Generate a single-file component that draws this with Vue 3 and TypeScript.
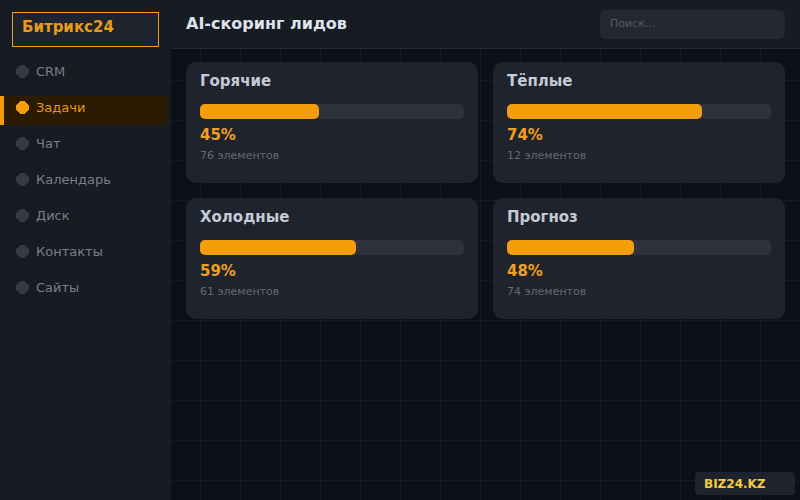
<script setup lang="ts">
import { ref } from 'vue'

interface Segment {
  title: string
  percent: number
  count: number
}

const sections: string[] = ['CRM', 'Задачи', 'Чат', 'Календарь', 'Диск', 'Контакты', 'Сайты']
const active = ref('Задачи')
const query = ref('')

const segments: Segment[] = [
  { title: 'Горячие', percent: 45, count: 76 },
  { title: 'Тёплые', percent: 74, count: 12 },
  { title: 'Холодные', percent: 59, count: 61 },
  { title: 'Прогноз', percent: 48, count: 74 },
]
</script>

<template>
  <div class="app">
    <aside class="sidebar">
      <div class="logo">Битрикс24</div>
      <nav class="nav">
        <a
          v-for="section in sections"
          :key="section"
          href="#"
          class="nav-item"
          :class="{ active: section === active }"
          @click.prevent="active = section"
        >
          <svg class="dot" viewBox="0 0 13 13" aria-hidden="true">
            <path d="M4 0H9V1H10V2H11V3H12V4H13V9H12V10H11V11H10V12H9V13H4V12H3V11H2V10H1V9H0V4H1V3H2V2H3V1H4Z" />
          </svg>
          <span>{{ section }}</span>
        </a>
      </nav>
    </aside>

    <div class="content">
      <header class="header">
        <h1 class="title">AI-скоринг лидов</h1>
        <input v-model="query" class="search" type="text" placeholder="Поиск..." aria-label="Поиск" />
      </header>
      <main class="cards">
        <section v-for="segment in segments" :key="segment.title" class="card">
          <h2 class="card-title">{{ segment.title }}</h2>
          <div class="track">
            <div class="fill" :style="{ width: segment.percent + '%' }"></div>
          </div>
          <div class="percent">{{ segment.percent }}%</div>
          <div class="count">{{ segment.count }} элементов</div>
        </section>
      </main>
    </div>

    <div class="badge">BIZ24.KZ</div>
  </div>
</template>

<style>
body {
  background: #0d1017;
}
</style>

<style scoped>
.app {
  display: flex;
  min-height: 100vh;
  font-family: 'DejaVu Sans', sans-serif;
  background-color: #0d1017;
  background-image:
    linear-gradient(to right, #161a21 1px, transparent 1px),
    linear-gradient(to bottom, #161a21 1px, transparent 1px);
  background-size: 40px 40px;
}

.app * {
  box-sizing: border-box;
}

.sidebar {
  flex: 0 0 171px;
  background: #171b22;
}

.logo {
  height: 35px;
  margin: 12px 12px 13px;
  padding: 0 9px;
  border: 1px solid #f0a020;
  background: #1f232d;
  color: #e89c1c;
  font-size: 15px;
  font-weight: bold;
  line-height: 29px;
}

.nav {
  display: flex;
  flex-direction: column;
  gap: 7px;
  padding-right: 4px;
}

.nav-item {
  display: flex;
  align-items: center;
  gap: 7px;
  height: 29px;
  padding: 0 12px;
  border-left: 4px solid transparent;
  color: #777f90;
  font-size: 13px;
  text-decoration: none;
}

.nav-item span {
  height: 29px;
  line-height: 24px;
}

.nav-item.active {
  border-left-color: #f59e0b;
  background: #2a1b02;
  color: #e8980f;
}

.dot {
  width: 13px;
  height: 13px;
  margin-bottom: 6px;
  fill: #363a45;
  shape-rendering: crispEdges;
}

.active .dot {
  fill: #f59e0b;
}

.content {
  flex: 1;
  min-width: 0;
}

.header {
  display: flex;
  align-items: flex-start;
  justify-content: space-between;
  height: 49px;
  padding: 10px 15px;
  border-bottom: 1px solid #252932;
  background: #171b22;
}

.title {
  margin: 0;
  color: #dfe2ec;
  font-size: 16px;
  line-height: 27px;
}

.search {
  width: 185px;
  height: 29px;
  padding: 0 10px 3px;
  border: 0;
  border-radius: 6px;
  outline: 0;
  background: #242832;
  color: #c9cdd8;
  font-family: inherit;
  font-size: 11px;
}

.search::placeholder {
  color: #555b67;
  opacity: 1;
}

.cards {
  display: grid;
  grid-template-columns: 1fr 1fr;
  gap: 15px;
  padding: 13px 15px;
}

.card {
  min-height: 121px;
  padding: 8px 14px;
  border-radius: 10px;
  background: #1f232d;
}

.card-title {
  margin: 0 0 12px;
  color: #c6cad6;
  font-size: 15px;
  line-height: 22px;
}

.track {
  height: 15px;
  border-radius: 5px;
  background: #2f323c;
}

.fill {
  height: 100%;
  border-radius: 5px;
  background: #f59e0b;
}

.percent {
  margin-top: 5px;
  color: #f0a020;
  font-size: 15px;
  font-weight: bold;
  line-height: 22px;
}

.count {
  color: #646a76;
  font-size: 11px;
  line-height: 20px;
}

.badge {
  position: fixed;
  right: 5px;
  bottom: 5px;
  box-sizing: border-box;
  width: 100px;
  height: 23px;
  padding: 0 9px;
  border-radius: 4px;
  background: #1f232d;
  color: #f5cc3d;
  font-size: 12px;
  font-weight: bold;
  line-height: 24px;
}
</style>
